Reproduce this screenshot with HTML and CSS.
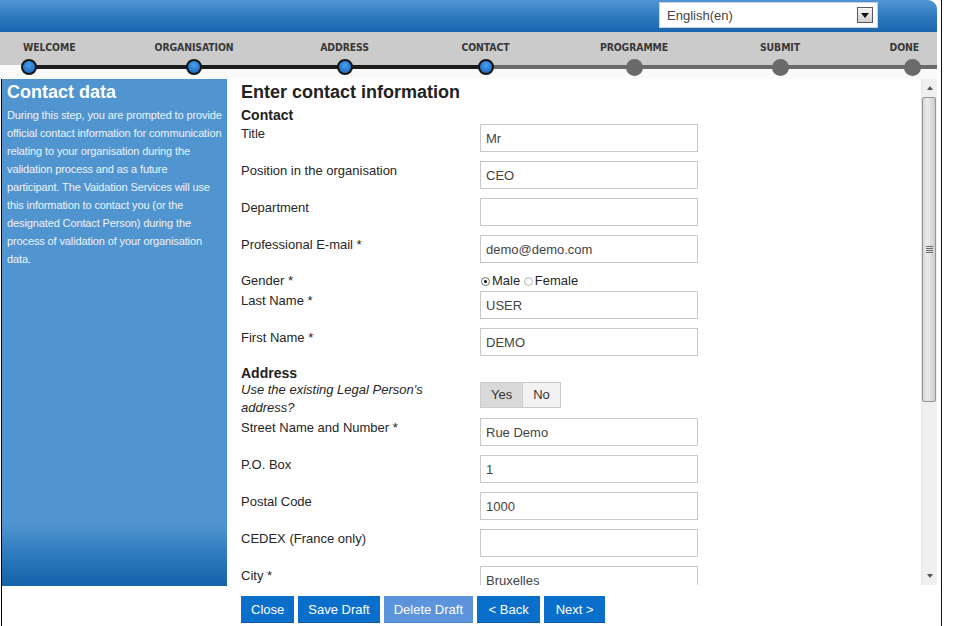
FILE: index.html
```html
<!DOCTYPE html>
<html lang="en">
<head>
<meta charset="utf-8">
<title>Enter contact information</title>
<link rel="stylesheet" href="styles.css">
</head>
<body>
<div class="frame">
  <header class="topbar">
    <div class="lang-select">
      <span class="lang-value">English(en)</span>
      <span class="lang-arrow"><span class="tri-down"></span></span>
    </div>
  </header>

  <nav class="stepper">
    <div class="step step-first"><span class="step-label">WELCOME</span><span class="dot"></span></div>
    <div class="step"><span class="step-label">ORGANISATION</span><span class="dot"></span></div>
    <div class="step"><span class="step-label">ADDRESS</span><span class="dot"></span></div>
    <div class="step"><span class="step-label">CONTACT</span><span class="dot"></span></div>
    <div class="step"><span class="step-label">PROGRAMME</span><span class="dot dot-todo"></span></div>
    <div class="step"><span class="step-label">SUBMIT</span><span class="dot dot-todo"></span></div>
    <div class="step step-last"><span class="step-label">DONE</span><span class="dot dot-todo"></span></div>
  </nav>

  <div class="workspace">
    <div class="panes">
      <aside class="sidebar">
        <h2 class="side-title">Contact data</h2>
        <p class="side-text">During this step, you are prompted to provide<br>official contact information for communication<br>relating to your organisation during the<br>validation process and as a future<br>participant. The Vaidation Services will use<br>this information to contact you (or the<br>designated Contact Person) during the<br>process of validation of your organisation<br>data.</p>
      </aside>

      <section class="scroller">
        <div class="form">
          <h1 class="form-title">Enter contact information</h1>
          <h3 class="group-title">Contact</h3>
          <div class="row"><span class="field-label">Title</span><input class="field-input" type="text" value="Mr"></div>
          <div class="row"><span class="field-label">Position in the organisation</span><input class="field-input" type="text" value="CEO"></div>
          <div class="row"><span class="field-label">Department</span><input class="field-input" type="text" value=""></div>
          <div class="row"><span class="field-label">Professional E-mail *</span><input class="field-input" type="text" value="demo@demo.com"></div>
          <div class="row row-radio"><span class="field-label">Gender *</span><span class="radios"><span class="radio radio-on"></span>Male <span class="radio"></span>Female</span></div>
          <div class="row"><span class="field-label">Last Name *</span><input class="field-input" type="text" value="USER"></div>
          <div class="row"><span class="field-label">First Name *</span><input class="field-input" type="text" value="DEMO"></div>
          <h3 class="group-title">Address</h3>
          <div class="row row-question"><span class="field-label field-label-em">Use the existing Legal Person's address?</span><span class="toggle"><span class="toggle-opt toggle-on">Yes</span><span class="toggle-opt">No</span></span></div>
          <div class="row"><span class="field-label">Street Name and Number *</span><input class="field-input" type="text" value="Rue Demo"></div>
          <div class="row"><span class="field-label">P.O. Box</span><input class="field-input" type="text" value="1"></div>
          <div class="row"><span class="field-label">Postal Code</span><input class="field-input" type="text" value="1000"></div>
          <div class="row"><span class="field-label">CEDEX (France only)</span><input class="field-input" type="text" value=""></div>
          <div class="row"><span class="field-label">City *</span><input class="field-input" type="text" value="Bruxelles"></div>
        </div>
        <div class="scrollbar">
          <div class="sb-btn"><span class="tri-up"></span></div>
          <div class="sb-thumb"><span class="grip"></span></div>
          <div class="sb-track"></div>
          <div class="sb-btn"><span class="tri-down tri-small"></span></div>
        </div>
      </section>
    </div>

    <div class="actions">
      <button class="btn" type="button">Close</button>
      <button class="btn" type="button">Save Draft</button>
      <button class="btn btn-muted" type="button">Delete Draft</button>
      <button class="btn btn-nav" type="button">&lt; Back</button>
      <button class="btn btn-nav" type="button">Next &gt;</button>
    </div>
  </div>
</div>
</body>
</html>
```

FILE: styles.css
```css
html, body {
  margin: 0;
  padding: 0;
  background: #ffffff;
}

body {
  font-family: "Liberation Sans", Arial, sans-serif;
  font-size: 13px;
  color: #222;
  width: 976px;
  height: 626px;
  overflow: hidden;
}

.frame {
  width: 937px;
  height: 626px;
  padding-right: 4px;
  border-right: 1px solid #111;
}

/* ---------- top bar ---------- */
.topbar {
  height: 32px;
  box-sizing: border-box;
  padding: 2px 59px 0 0;
  display: flex;
  justify-content: flex-end;
  align-items: flex-start;
  background: linear-gradient(#5096d4 0%, #2e78bd 55%, #1a64ad 100%);
  border-top-right-radius: 9px;
}

.lang-select {
  width: 219px;
  height: 26px;
  box-sizing: border-box;
  background: #fff;
  border: 1px solid #c9d3de;
  display: flex;
  align-items: center;
  justify-content: space-between;
  padding: 0 4px 0 7px;
}

.lang-value {
  font-size: 13px;
  color: #444;
}

.lang-arrow {
  width: 16px;
  height: 16px;
  box-sizing: border-box;
  border: 1px solid #5a5a5a;
  background: linear-gradient(#f6f6f6, #cfcfcf);
  display: flex;
  align-items: center;
  justify-content: center;
}

.tri-down {
  width: 0;
  height: 0;
  border-left: 4px solid transparent;
  border-right: 4px solid transparent;
  border-top: 5px solid #111;
}

.tri-small {
  border-left-width: 3px;
  border-right-width: 3px;
  border-top: 4px solid #555;
}

.tri-up {
  width: 0;
  height: 0;
  border-left: 3px solid transparent;
  border-right: 3px solid transparent;
  border-bottom: 4px solid #555;
}

/* ---------- stepper ---------- */
.stepper {
  position: relative;
  height: 47px;
  box-sizing: border-box;
  padding-top: 8px;
  display: grid;
  grid-template-columns: 97px 194px 107px 175px 122px 170px 72px;
  align-items: start;
  background: linear-gradient(#cbcbcb 0, #cbcbcb 33px, #fafafa 33px);
}

.stepper::before {
  content: "";
  position: absolute;
  left: 29px;
  right: 0;
  top: 33px;
  height: 4px;
  background: linear-gradient(to right, #1c1c1c 458px, #6a6a6a 458px);
}

.step {
  display: flex;
  flex-direction: column;
  align-items: center;
  gap: 5px;
}

.step-first {
  align-items: flex-start;
}

.step-first .step-label {
  margin-left: 23px;
}

.step-first .dot {
  margin-left: 21px;
}

.step-last {
  align-items: flex-end;
}

.step-last .step-label {
  margin-right: 18px;
}

.step-last .dot {
  margin-right: 16px;
}

.step-label {
  height: 14px;
  line-height: 14px;
  font-family: "Liberation Sans Narrow", "DejaVu Sans Condensed", "Liberation Sans", sans-serif;
  font-stretch: condensed;
  font-weight: bold;
  font-size: 10.4px;
  letter-spacing: -0.1px;
  color: #383838;
  white-space: nowrap;
}

.dot {
  position: relative;
  z-index: 1;
  width: 16px;
  height: 16px;
  box-sizing: border-box;
  border-radius: 50%;
  border: 2.5px solid #151515;
  background: radial-gradient(circle at 50% 35%, #4a9fe9 0%, #2a7bd0 55%, #1a62b2 100%);
}

.dot-todo {
  width: 17px;
  height: 17px;
  border: none;
  background: #6a6a6a;
}

/* ---------- workspace ---------- */
.workspace {
  margin-left: 1px;
  border-left: 1px solid #000;
  height: 547px;
}

.panes {
  display: flex;
  height: 507px;
}

.sidebar {
  width: 225px;
  flex: none;
  box-sizing: border-box;
  padding: 2px 0 0 5px;
  background: linear-gradient(#5095d0 0, #5095d0 444px, #2f7bbf 475px, #1562aa 100%);
  color: #fff;
  overflow: hidden;
}

.side-title {
  margin: 0 0 3px 0;
  font-size: 18px;
  line-height: 22px;
  font-weight: bold;
  color: #fff;
}

.side-text {
  margin: 0;
  font-size: 11px;
  line-height: 18px;
  letter-spacing: -0.12px;
  color: #eef3fa;
  white-space: nowrap;
}

.scroller {
  width: 710px;
  flex: none;
  display: flex;
  height: 507px;
  overflow: hidden;
  background: #fff;
}

.form {
  flex: 1;
  padding: 2px 0 0 14px;
  overflow: hidden;
  height: 506px;
  box-sizing: border-box;
}

.form-title {
  margin: 0;
  font-size: 18px;
  line-height: 22px;
  font-weight: bold;
  color: #222;
}

.group-title {
  margin: 4px 0 1px;
  font-size: 14px;
  line-height: 16px;
  font-weight: bold;
  color: #222;
}

.row + .group-title {
  margin-top: 0;
  margin-bottom: 0;
}

.row {
  display: flex;
  align-items: flex-start;
  margin-bottom: 9px;
}

.field-label {
  width: 225px;
  margin-right: 14px;
  flex: none;
  line-height: 18px;
  font-size: 13px;
  color: #262626;
  padding-top: 1px;
}

.field-label-em {
  font-style: italic;
  padding-top: 0;
}

.field-input {
  width: 218px;
  height: 28px;
  box-sizing: border-box;
  margin: 0;
  border: 1px solid #c9c9c9;
  padding: 0 5px;
  font-family: "Liberation Sans", Arial, sans-serif;
  font-size: 13px;
  color: #444;
  background: #fff;
  outline: none;
}

.row-radio {
  margin-bottom: 1px;
}

.row-radio .field-label {
  padding-top: 0;
}

.radios {
  display: flex;
  align-items: center;
  line-height: 18px;
  color: #262626;
  white-space: pre;
  margin-left: 1px;
}

.radio {
  width: 9px;
  height: 9px;
  box-sizing: border-box;
  border-radius: 50%;
  border: 1px solid #b5b5b5;
  background: #fff;
  margin-right: 2px;
  display: inline-flex;
  align-items: center;
  justify-content: center;
}

.radio-on {
  border-color: #6d6d6d;
}

.radio-on::after {
  content: "";
  width: 3px;
  height: 3px;
  border-radius: 50%;
  background: #000;
}

.row-question {
  margin-bottom: 1px;
}

.toggle {
  display: flex;
  margin-top: 1px;
  height: 26px;
  box-sizing: border-box;
  border: 1px solid #cacaca;
}

.toggle-opt {
  line-height: 24px;
  padding: 0 10px;
  background: #f2f2f2;
  color: #333;
}

.toggle-opt + .toggle-opt {
  border-left: 1px solid #d0d0d0;
}

.toggle-on {
  background: #d9d9d9;
}

/* ---------- scrollbar ---------- */
.scrollbar {
  width: 16px;
  flex: none;
  height: 506px;
  display: flex;
  flex-direction: column;
  background: #f0f0f0;
  box-sizing: border-box;
  border-left: 1px solid #e6e6e6;
}

.sb-btn {
  height: 18px;
  flex: none;
  display: flex;
  align-items: center;
  justify-content: center;
}

.sb-thumb {
  height: 305px;
  flex: none;
  margin: 0 1px 0 0;
  box-sizing: border-box;
  border: 1px solid #959595;
  border-radius: 2px;
  background: linear-gradient(to right, #d6d6d6, #ececec 35%, #dedede 65%, #cdcdcd);
  display: flex;
  align-items: center;
  justify-content: center;
}

.grip {
  width: 7px;
  height: 7px;
  background: repeating-linear-gradient(#6a6a6a 0, #6a6a6a 1px, transparent 1px, transparent 2px);
}

.sb-track {
  flex: 1;
}

/* ---------- actions ---------- */
.actions {
  height: 40px;
  box-sizing: border-box;
  padding: 10px 0 0 239px;
  display: flex;
  gap: 4px;
}

.btn {
  height: 27px;
  margin: 0;
  padding: 0 10px;
  border: none;
  background: #0a6fcb;
  box-shadow: inset 0 -1px 0 #0a5aa8;
  color: #fff;
  font-family: "Liberation Sans", Arial, sans-serif;
  font-size: 13px;
  line-height: 27px;
  cursor: pointer;
}

.btn-nav {
  padding: 0 11.5px;
}

.btn-muted {
  background: #5b93dc;
  box-shadow: inset 0 -1px 0 #4d84cc;
}
```
